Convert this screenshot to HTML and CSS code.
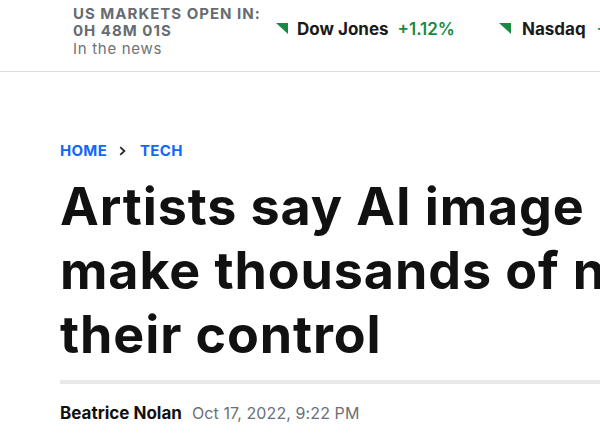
FILE: index.html
```html
<!DOCTYPE html>
<html>
<head>
<meta charset="utf-8">
<link rel="stylesheet" href="styles.css">
</head>
<body>
<header class="ticker">
  <div class="countdown">
    <div class="cd-title">US MARKETS OPEN IN:</div>
    <div class="cd-title">0H 48M 01S</div>
    <div class="cd-sub">In the news</div>
  </div>
  <div class="quotes">
    <div class="quote">
      <svg class="tri" width="12" height="11" viewBox="0 0 12 11"><polygon points="0,0 12,0 12,11" fill="#178a43"/></svg>
      <span class="q-name">Dow Jones</span>
      <span class="q-val">+1.12%</span>
    </div>
    <div class="quote">
      <svg class="tri" width="12" height="11" viewBox="0 0 12 11"><polygon points="0,0 12,0 12,11" fill="#178a43"/></svg>
      <span class="q-name">Nasdaq</span>
      <span class="q-val">+1.87%</span>
    </div>
  </div>
</header>
<main class="article">
  <nav class="crumbs">
    <a class="crumb">HOME</a>
    <svg class="chev" width="7" height="10" viewBox="0 0 7 10"><path d="M1.2 1.2 L5.4 5 L1.2 8.8" fill="none" stroke="#222" stroke-width="1.7"/></svg>
    <a class="crumb">TECH</a>
  </nav>
  <h1 class="headline"><span class="hl-line">Artists say AI image generators are copying their style to</span> <span class="hl-line">make thousands of new images — and it's completely out of</span> <span class="hl-line">their control</span></h1>
  <div class="rule"></div>
  <div class="byline">
    <span class="author">Beatrice Nolan</span>
    <span class="date">Oct 17, 2022, 9:22 PM</span>
  </div>
</main>
</body>
</html>
```

FILE: styles.css
```css
html, body {
  margin: 0;
  padding: 0;
  background: #fff;
  overflow: hidden;
}
body {
  width: 1900px;
  font-family: Inter, "Liberation Sans", sans-serif;
  color: #111;
}
.ticker {
  display: flex;
  align-items: flex-start;
  height: 72px;
  border-bottom: 1px solid #dcdcdc;
  box-sizing: border-box;
  padding: 5px 0 0 73px;
}
.countdown {
  width: 203px;
}
.cd-title {
  font-size: 15px;
  font-weight: 700;
  line-height: 17px;
  color: #666c71;
  letter-spacing: 1px;
}
.cd-sub {
  font-size: 15px;
  line-height: 19px;
  color: #6e7378;
  letter-spacing: 0.7px;
}
.quotes {
  display: flex;
  gap: 44px;
  padding-top: 14px;
}
.quote {
  display: flex;
  align-items: center;
  gap: 9px;
}
.quote + .quote {
  gap: 11px;
}
.tri {
  margin-top: -1px;
}
.q-name {
  font-size: 17px;
  font-weight: 700;
  color: #1a1a1a;
}
.q-val {
  font-size: 17px;
  font-weight: 600;
  color: #178a43;
}
.article {
  padding: 68px 0 0 60px;
}
.crumbs {
  display: flex;
  align-items: center;
  height: 20px;
}
.crumb {
  font-size: 15px;
  font-weight: 700;
  color: #1068f8;
  letter-spacing: 0.3px;
}
.chev {
  margin: 1px 14px 0 12px;
}
.headline {
  margin: 15px 0 0;
  font-size: 52px;
  line-height: 64px;
  font-weight: 700;
  letter-spacing: 0.9px;
  color: #111;
}
.hl-line {
  display: block;
  white-space: nowrap;
}
.rule {
  height: 4px;
  background: #e8e8ea;
  margin-top: 13px;
}
.byline {
  display: flex;
  align-items: baseline;
  gap: 10px;
  margin-top: 19px;
}
.author {
  font-size: 17px;
  font-weight: 700;
  color: #111;
}
.date {
  font-size: 16px;
  letter-spacing: 0.1px;
  color: #6b7076;
}
```
